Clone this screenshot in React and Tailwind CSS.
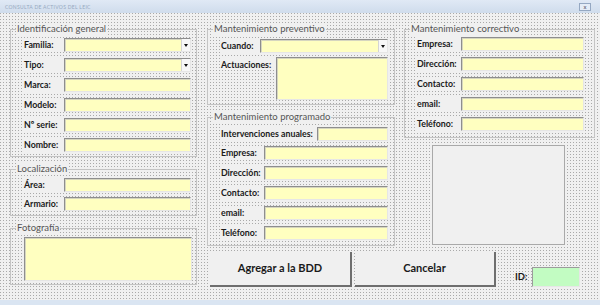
import React from 'react';

const font = "font-['Lato','Open_Sans',sans-serif]";

function Field({ w = 'flex-1', h = 'h-[14px]', combo = false }) {
  return (
    <div className={`${w} ${h} flex bg-[#ffffc0] border border-t-[#8e8e8e] border-l-[#8e8e8e] border-b-[#e6e6e6] border-r-[#e6e6e6] shadow-[inset_1px_1px_0_#d6d6c0]`}>
      <div className="flex-1" />
      {combo && (
        <div className="w-[9px] h-full bg-[#f7f7f7] border-l border-[#d4d4d4] flex items-center justify-center">
          <svg width="4" height="3" viewBox="0 0 4 3"><path d="M0 0h4L2 3z" fill="#111" /></svg>
        </div>
      )}
    </div>
  );
}

function Row({ label, lw, combo, fw }) {
  return (
    <div className="flex items-center">
      <div className={`${lw} h-[14px] flex items-center bg-[#f0f0f0] text-[8.8px] font-bold text-[#1a1a1a]`}>{label}</div>
      <Field combo={combo} w={fw} />
    </div>
  );
}

function Frame({ title, className = '', children }) {
  return (
    <fieldset className={`border border-[#c4c4c4] ${className}`}>
      <legend className="ml-[5px] px-[1px] bg-[#f0f0f0] text-[9.5px] leading-[12px] text-[#555]">{title}</legend>
      {children}
    </fieldset>
  );
}

export default function App() {
  return (
    <div className={`w-[600px] h-[305px] flex flex-col bg-[#f0f0f0] overflow-hidden ${font}`}>
      <div className="h-[13px] flex items-center justify-between pl-[5px] pr-[9px] bg-[linear-gradient(#e0e9f5,#cfdcec)]">
        <span className="text-[5px] leading-[6px] tracking-[0.3px] text-[#95a8c0]">CONSULTA DE ACTIVOS DEL LEIC</span>
        <div className="w-[12px] h-[8px] border border-[#95a8c2] bg-[#e4ecf6] flex items-center justify-center text-[6px] leading-[6px] text-[#556]">x</div>
      </div>

      <div className="flex-1 flex pl-[10px] pt-[10px] bg-[#f0f0f0] bg-[radial-gradient(circle_at_0.5px_0.5px,#a9a9a9_0.6px,transparent_0.7px)] bg-[length:3px_3px]">
        {/* left column */}
        <div className="w-[187px] flex flex-col">
          <Frame title="Identificación general">
            <div className="flex flex-col gap-[6px] pt-[3px] pb-[4px] pl-[13px] pr-[5px]">
              <Row label="Familia:" lw="w-[40px]" combo />
              <Row label="Tipo:" lw="w-[40px]" combo />
              <Row label="Marca:" lw="w-[40px]" />
              <Row label="Modelo:" lw="w-[40px]" />
              <Row label="Nº serie:" lw="w-[40px]" />
              <Row label="Nombre:" lw="w-[40px]" />
            </div>
          </Frame>
          <Frame title="Localización" className="mt-[6px]">
            <div className="flex flex-col gap-[5px] pt-[3px] pb-[4px] pl-[13px] pr-[5px]">
              <Row label="Área:" lw="w-[40px]" />
              <Row label="Armario:" lw="w-[40px]" />
            </div>
          </Frame>
          <Frame title="Fotografía" className="mt-[6px]">
            <div className="pt-[3px] pb-[3px] pl-[13px] pr-[4px]">
              <Field w="w-full" h="h-[44px]" />
            </div>
          </Frame>
        </div>

        {/* right side */}
        <div className="ml-[10px] w-[388px] flex flex-col">
          <div className="flex items-start">
            <div className="w-[188px] flex flex-col">
              <Frame title="Mantenimiento preventivo">
                <div className="flex flex-col gap-[4px] pt-[4px] pb-[4px] pl-[13px] pr-[6px]">
                  <Row label="Cuando:" lw="w-[39px]" combo />
                  <div className="flex items-start">
                    <div className="w-[55px] pt-[3px] bg-[#f0f0f0] text-[8.8px] leading-[10px] font-bold text-[#1a1a1a]">Actuaciones:</div>
                    <Field h="h-[43px]" />
                  </div>
                </div>
              </Frame>
              <Frame title="Mantenimiento programado" className="mt-[6px]">
                <div className="flex flex-col pt-[4px] pb-[5px] pl-[13px] pr-[6px]">
                  <Row label="Intervenciones anuales:" lw="w-[96px]" />
                  <div className="flex flex-col gap-[6px] mt-[5px]">
                    <Row label="Empresa:" lw="w-[43px]" />
                    <Row label="Dirección:" lw="w-[43px]" />
                    <Row label="Contacto:" lw="w-[43px]" />
                    <Row label="email:" lw="w-[43px]" />
                    <Row label="Teléfono:" lw="w-[43px]" />
                  </div>
                </div>
              </Frame>
            </div>

            <div className="ml-[9px] w-[191px] flex flex-col">
              <Frame title="Mantenimiento correctivo">
                <div className="flex flex-col gap-[6px] pt-[2px] pb-[6px] pl-[12px] pr-[10px]">
                  <Row label="Empresa:" lw="w-[44px]" />
                  <Row label="Dirección:" lw="w-[44px]" />
                  <Row label="Contacto:" lw="w-[44px]" />
                  <Row label="email:" lw="w-[44px]" />
                  <Row label="Teléfono:" lw="w-[44px]" />
                </div>
              </Frame>
              <div className="mt-[7px] ml-[28px] w-[133px] h-[100px] bg-[#f0f0f0] border border-[#a9a9a9]" />
            </div>
          </div>

          <div className="mt-[6px] flex items-end">
            <button type="button" className="ml-[3px] w-[142px] h-[35px] bg-[#f0f0f0] border-r-2 border-b-2 border-[#6e6e6e] text-[11px] font-bold text-[#1a1a1a]">Agregar a la BDD</button>
            <button type="button" className="ml-[3px] w-[141px] h-[35px] bg-[#f0f0f0] border-r-2 border-b-2 border-[#6e6e6e] text-[11px] font-bold text-[#1a1a1a]">Cancelar</button>
            <div className="ml-[19px] flex items-center h-[20px]">
              <span className="w-[17px] text-[9.5px] font-bold text-[#1a1a1a]">ID:</span>
              <div className="w-[48px] h-[20px] bg-[#c2fcc2] border border-t-[#9c9c9c] border-l-[#9c9c9c] border-b-[#e6e6e6] border-r-[#e6e6e6]" />
            </div>
          </div>
        </div>
      </div>

      <div className="h-[5px] bg-[#dae5f2]" />
    </div>
  );
}
